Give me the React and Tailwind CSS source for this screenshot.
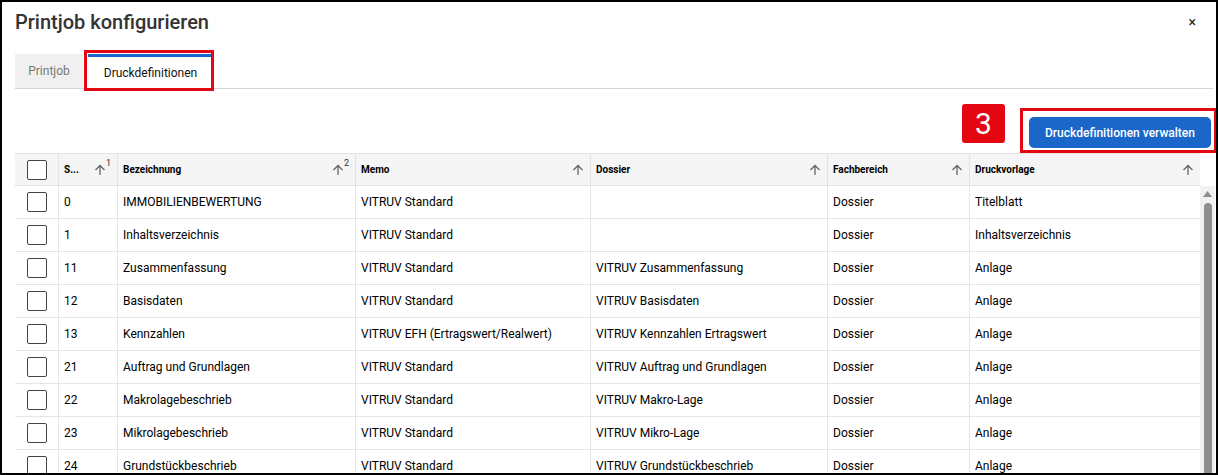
import React from "react";

const rows = [
  ["0", "IMMOBILIENBEWERTUNG", "VITRUV Standard", "", "Dossier", "Titelblatt"],
  ["1", "Inhaltsverzeichnis", "VITRUV Standard", "", "Dossier", "Inhaltsverzeichnis"],
  ["11", "Zusammenfassung", "VITRUV Standard", "VITRUV Zusammenfassung", "Dossier", "Anlage"],
  ["12", "Basisdaten", "VITRUV Standard", "VITRUV Basisdaten", "Dossier", "Anlage"],
  ["13", "Kennzahlen", "VITRUV EFH (Ertragswert/Realwert)", "VITRUV Kennzahlen Ertragswert", "Dossier", "Anlage"],
  ["21", "Auftrag und Grundlagen", "VITRUV Standard", "VITRUV Auftrag und Grundlagen", "Dossier", "Anlage"],
  ["22", "Makrolagebeschrieb", "VITRUV Standard", "VITRUV Makro-Lage", "Dossier", "Anlage"],
  ["23", "Mikrolagebeschrieb", "VITRUV Standard", "VITRUV Mikro-Lage", "Dossier", "Anlage"],
  ["24", "Grundstückbeschrieb", "VITRUV Standard", "VITRUV Grundstückbeschrieb", "Dossier", "Anlage"],
];

const cols = "grid-cols-[44px_59px_238px_235px_237px_142px_230px]";

function Arrow() {
  return (
    <svg width="12" height="12" viewBox="0 0 12 12" className="shrink-0">
      <path d="M6 11V1.5M1.5 6L6 1.5L10.5 6" fill="none" stroke="#666" strokeWidth="1.3" />
    </svg>
  );
}

function Box() {
  return <div className="w-[20px] h-[20px] border border-[#444] rounded-[2px] bg-white" />;
}

function HeadCell({ label, sup, last }) {
  return (
    <div className={`flex items-center justify-between pl-[5px] pr-[6px] ${last ? "" : "border-r border-[#e3e3e3]"}`}>
      <span className="text-[10px] font-bold text-black">{label}</span>
      <span className="flex items-start">
        <Arrow />
        {sup && <span className="text-[9px] leading-[9px] -mt-[5px] text-[#333]">{sup}</span>}
      </span>
    </div>
  );
}

export default function App() {
  return (
    <div className="w-[1218px] h-[475px] border-2 border-black bg-white overflow-hidden font-['Roboto',sans-serif] flex flex-col">
      <div className="flex items-center justify-between pl-[13px] pr-[20px] h-[40px] shrink-0">
        <h1 className="text-[20px] font-medium text-[#333] leading-[24px]">Printjob konfigurieren</h1>
        <span className="text-[14px] text-[#222] leading-none">×</span>
      </div>

      <div className="flex items-end h-[47px] shrink-0 ml-[13px] mr-[3px] border-b border-[#d4d4d4]">
        <div className="w-[68px] h-[34px] bg-[#f0f0f0] flex items-center justify-center text-[12px] text-[#777]">Printjob</div>
        <div className="relative ml-[5px] w-[125px] h-[34px] border-t-[3px] border-[#1a66c9] flex items-center justify-center text-[12px] text-[#111]">
          Druckdefinitionen
          <div className="absolute -left-[4px] -top-[7px] -right-[1px] -bottom-[3px] border-[3px] border-[#e30613]" />
        </div>
      </div>

      <div className="flex justify-end items-start h-[64px] shrink-0 pr-[5px]">
        <div className="mt-[15px] w-[43px] h-[39px] bg-[#e30613] rounded-[3px] flex items-center justify-center text-white text-[30px] leading-none">3</div>
        <div className="relative ml-[24px] mt-[28px]">
          <div className="w-[182px] h-[31px] bg-[#1a66c9] rounded-[5px] flex items-center justify-center text-white text-[12px] font-medium">
            Druckdefinitionen verwalten
          </div>
          <div className="absolute -left-[9px] -top-[9px] -right-[6px] -bottom-[5px] border-[3px] border-[#e30613]" />
        </div>
      </div>

      <div className="ml-[13px] flex flex-col">
        <div className="flex">
          <div className={`grid ${cols} h-[33px] bg-[#f5f5f5] border-y border-[#e3e3e3]`}>
            <div className="flex items-center justify-center border-r border-[#e3e3e3]"><Box /></div>
            <HeadCell label="S..." sup="1" />
            <HeadCell label="Bezeichnung" sup="2" />
            <HeadCell label="Memo" />
            <HeadCell label="Dossier" />
            <HeadCell label="Fachbereich" />
            <HeadCell label="Druckvorlage" last />
          </div>
          <div className="w-[15px] bg-white" />
        </div>
        <div className="flex">
          <div className="flex flex-col">
            {rows.map((r, i) => (
              <div key={i} className={`grid ${cols} h-[33px] border-b border-[#e6e6e6] text-[12px] text-black`}>
                <div className="flex items-center justify-center border-r border-[#e6e6e6]"><Box /></div>
                {r.map((c, j) => (
                  <div key={j} className={`flex items-center pl-[5px] whitespace-nowrap ${j < 5 ? "border-r border-[#e6e6e6]" : ""}`}>{c}</div>
                ))}
              </div>
            ))}
          </div>
          <div className="w-[15px] bg-[#f1f1f1] flex flex-col items-center pt-[5px]">
            <svg width="9" height="6" viewBox="0 0 9 6"><path d="M0 6L4.5 0L9 6Z" fill="#8c8c8c" /></svg>
            <div className="mt-[6px] w-[8px] flex-1 bg-[#8f8f8f] rounded-t-[4px]" />
          </div>
        </div>
      </div>
    </div>
  );
}
